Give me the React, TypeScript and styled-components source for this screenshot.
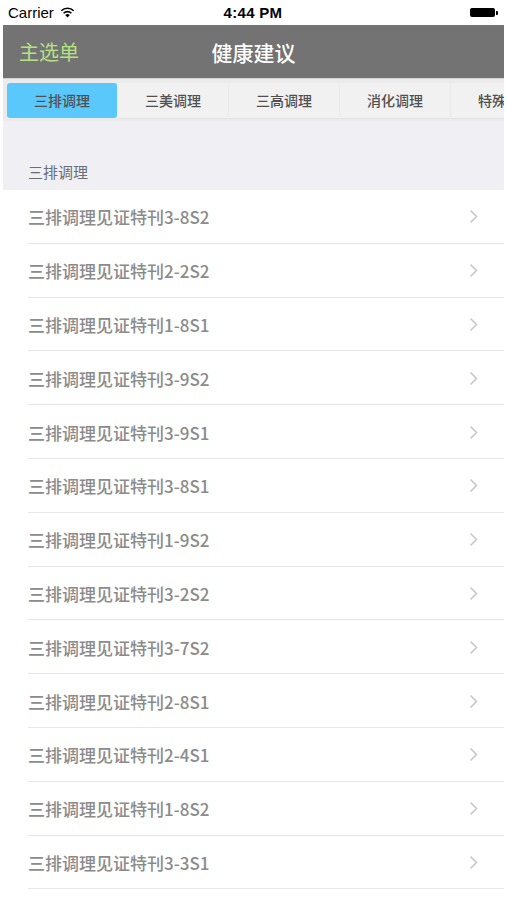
import * as React from 'react';
import styled, { createGlobalStyle } from 'styled-components';

const GlobalStyle = createGlobalStyle`
  html, body {
    margin: 0;
    padding: 0;
    background: #ffffff;
  }
  body {
    font-family: "Noto Sans CJK SC", "Noto Sans", sans-serif;
  }
`;

const Phone = styled.div`
  width: 507px;
  height: 900px;
  overflow: hidden;
  background: #ffffff;
  display: flex;
  flex-direction: column;
`;

const StatusBar = styled.div`
  flex-shrink: 0;
  height: 25px;
  display: grid;
  grid-template-columns: 1fr auto 1fr;
  align-items: center;
  padding: 0 9px 0 8px;
  font-family: "Liberation Sans", Arial, sans-serif;
  font-size: 15px;
  color: #000;
`;

const Carrier = styled.div`
  display: flex;
  align-items: center;
  gap: 6px;
`;

const Clock = styled.div`
  font-weight: 700;
  letter-spacing: 0.3px;
`;

const Battery = styled.div`
  justify-self: end;
  display: flex;
  align-items: center;
`;

const BatteryBody = styled.div`
  width: 25px;
  height: 9px;
  background: #000;
  border-radius: 2px;
`;

const BatteryTip = styled.div`
  width: 2px;
  height: 4px;
  margin-left: 1px;
  background: #000;
  border-radius: 0 1px 1px 0;
`;

const Screen = styled.div`
  flex: 1;
  margin: 0 3px;
  display: flex;
  flex-direction: column;
  min-height: 0;
  overflow: hidden;
`;

const NavBar = styled.div`
  flex-shrink: 0;
  height: 53px;
  background: #737373;
  display: grid;
  grid-template-columns: 1fr auto 1fr;
  align-items: center;
  padding: 0 16px;
`;

const NavButton = styled.span`
  color: #b5e285;
  font-size: 20px;
`;

const NavTitle = styled.span`
  color: #ffffff;
  font-size: 21px;
  font-weight: 500;
`;

const TabStrip = styled.div`
  flex-shrink: 0;
  height: 43px;
  box-sizing: border-box;
  background: #ebebeb;
  display: flex;
  align-items: stretch;
  padding: 4px 0 3px 4px;
  overflow: hidden;
  border-top: 1px solid #d2d2d2;
`;

const Tab = styled.div<{ $active?: boolean }>`
  flex: 0 0 110px;
  margin-right: 1px;
  display: flex;
  align-items: center;
  justify-content: center;
  padding-bottom: 1px;
  font-size: 14px;
  font-weight: 500;
  color: #505050;
  white-space: nowrap;
  background: ${p => (p.$active ? '#5bc8fb' : '#f1f1f1')};
  border-radius: ${p => (p.$active ? '3px' : '0')};
  box-shadow: ${p => (p.$active ? 'none' : '0 1px 0 #e2e2e2')};
`;

const SectionHeader = styled.div`
  flex-shrink: 0;
  height: 69px;
  box-sizing: border-box;
  background: #efeff4;
  display: flex;
  align-items: flex-end;
  padding: 0 0 8px 25px;
  font-size: 15px;
  color: #6d6d72;
`;

const List = styled.div`
  flex-shrink: 0;
  background: #ffffff;
`;

const Row = styled.div`
  height: 53.8px;
  box-sizing: border-box;
  display: flex;
  align-items: center;
  padding: 0 26px 0 25px;
  position: relative;
  font-size: 17px;
  font-weight: 500;
  color: #8b8b8b;

  &::after {
    content: '';
    position: absolute;
    left: 25px;
    right: 0;
    bottom: 0;
    height: 1px;
    background: #e6e6e8;
  }
`;

const RowLabel = styled.span`
  flex: 1;
`;

const Chevron = () => (
  <svg width="9" height="15" viewBox="0 0 9 15">
    <path d="M1.5 1.5 L7.5 7.5 L1.5 13.5" fill="none" stroke="#c7c7cc" strokeWidth="1.6" />
  </svg>
);

const Wifi = () => (
  <svg width="15" height="11" viewBox="0 0 15 11">
    <path d="M7.5 10.5 L5.2 8 A3.3 3.3 0 0 1 9.8 8 Z" fill="#000" />
    <path d="M3.6 6.2 A5.6 5.6 0 0 1 11.4 6.2" fill="none" stroke="#000" strokeWidth="1.6" />
    <path d="M1.3 3.8 A8.8 8.8 0 0 1 13.7 3.8" fill="none" stroke="#000" strokeWidth="1.6" />
  </svg>
);

const tabs = ['三排调理', '三美调理', '三高调理', '消化调理', '特殊调理'];

const items = [
  '三排调理见证特刊3-8S2',
  '三排调理见证特刊2-2S2',
  '三排调理见证特刊1-8S1',
  '三排调理见证特刊3-9S2',
  '三排调理见证特刊3-9S1',
  '三排调理见证特刊3-8S1',
  '三排调理见证特刊1-9S2',
  '三排调理见证特刊3-2S2',
  '三排调理见证特刊3-7S2',
  '三排调理见证特刊2-8S1',
  '三排调理见证特刊2-4S1',
  '三排调理见证特刊1-8S2',
  '三排调理见证特刊3-3S1',
];

const App: React.FC = () => (
  <Phone>
    <GlobalStyle />
    <StatusBar>
      <Carrier>
        <span>Carrier</span>
        <Wifi />
      </Carrier>
      <Clock>4:44 PM</Clock>
      <Battery>
        <BatteryBody />
        <BatteryTip />
      </Battery>
    </StatusBar>
    <Screen>
      <NavBar>
        <NavButton>主选单</NavButton>
        <NavTitle>健康建议</NavTitle>
        <span />
      </NavBar>
      <TabStrip>
        {tabs.map((t, i) => (
          <Tab key={t} $active={i === 0}>{t}</Tab>
        ))}
      </TabStrip>
      <SectionHeader>三排调理</SectionHeader>
      <List>
        {items.map((label, i) => (
          <Row key={i}>
            <RowLabel>{label}</RowLabel>
            <Chevron />
          </Row>
        ))}
      </List>
    </Screen>
  </Phone>
);

export default App;
